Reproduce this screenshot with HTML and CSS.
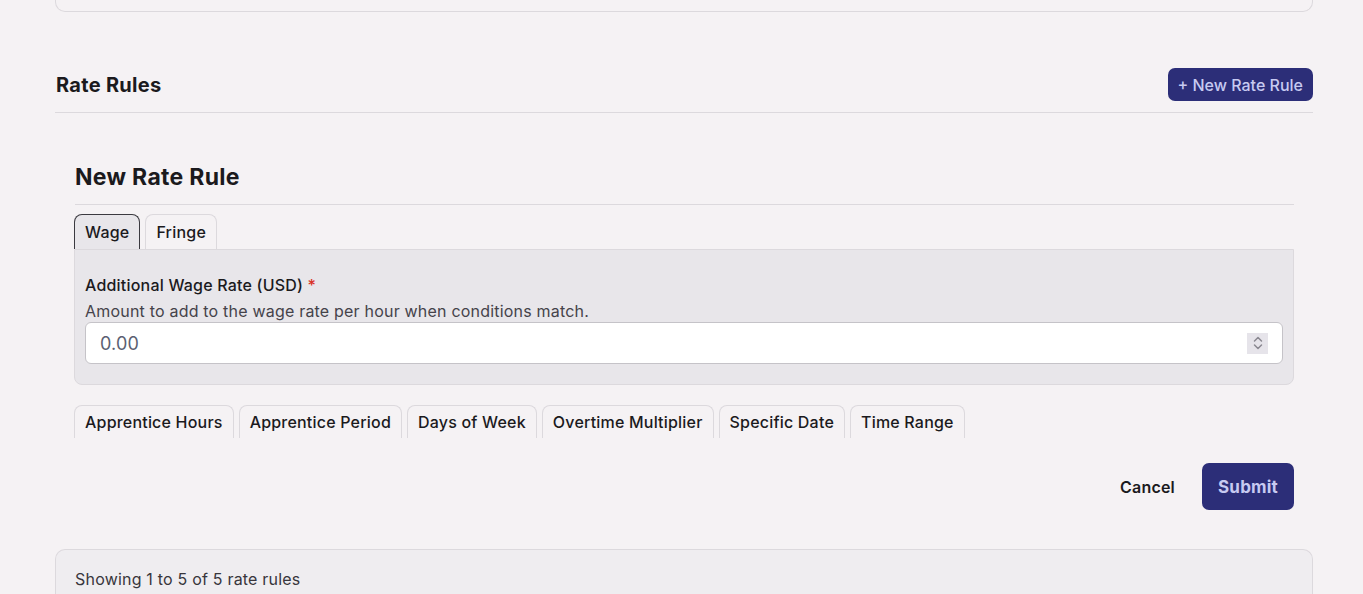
FILE: index.html
```html
<!DOCTYPE html>
<html lang="en">
<head>
  <meta charset="UTF-8">
  <meta name="viewport" content="width=device-width, initial-scale=1.0">
  <title>Rate Rules</title>
  <link rel="stylesheet" href="styles.css">
</head>
<body>
  <div class="page">
    <div class="card-top"></div>

    <div class="section-header">
      <h1>Rate Rules</h1>
      <button class="btn-primary btn-small" type="button">+ New Rate Rule</button>
    </div>

    <form class="rule-form">
      <h2>New Rate Rule</h2>

      <div class="tabs">
        <button type="button" class="tab active">Wage</button>
        <button type="button" class="tab">Fringe</button>
      </div>
      <div class="tab-panel">
        <label for="wage-rate">Additional Wage Rate (USD) <span class="req">*</span></label>
        <p class="help">Amount to add to the wage rate per hour when conditions match.</p>
        <div class="number-input">
          <input id="wage-rate" type="text" value="0.00">
          <span class="spinner">
            <svg width="12" height="16" viewBox="0 0 12 16" fill="none" stroke="#8a8891" stroke-width="1.5" stroke-linecap="round" stroke-linejoin="round">
              <path d="M2.5 6 L6 2.5 L9.5 6"/>
              <path d="M2.5 10 L6 13.5 L9.5 10"/>
            </svg>
          </span>
        </div>
      </div>

      <div class="tabs conditions">
        <button type="button" class="tab">Apprentice Hours</button>
        <button type="button" class="tab">Apprentice Period</button>
        <button type="button" class="tab">Days of Week</button>
        <button type="button" class="tab">Overtime Multiplier</button>
        <button type="button" class="tab">Specific Date</button>
        <button type="button" class="tab">Time Range</button>
      </div>

      <div class="actions">
        <button type="button" class="btn-link">Cancel</button>
        <button type="submit" class="btn-primary btn-large">Submit</button>
      </div>
    </form>

    <div class="card-bottom">
      Showing 1 to 5 of 5 rate rules
    </div>
  </div>
</body>
</html>
```

FILE: styles.css
```css
body {
  font-family: Inter, "Noto Sans", sans-serif;
  background-color: #f5f2f4;
  color: #1b1a1d;
  letter-spacing: 0.2px;
  margin: 0;
}
.page {
  padding: 0 50px 0 55px;
}
.card-top {
  height: 11px;
  border: 1px solid #dcd9dd;
  border-top: none;
  border-radius: 0 0 10px 10px;
}
.section-header {
  display: flex;
  justify-content: space-between;
  align-items: center;
  margin-top: 56px;
  padding-bottom: 11px;
  border-bottom: 1px solid #dcd9dd;
}
h1 {
  margin: 0;
  font-size: 20px;
  font-weight: 700;
  letter-spacing: 0.3px;
  padding: 1px 0 0 1px;
}
button {
  font-family: inherit;
  letter-spacing: inherit;
  cursor: pointer;
}
.btn-primary {
  background-color: #2c2e78;
  color: #c7caf1;
  border: none;
  border-radius: 7px;
}
.btn-small {
  height: 33px;
  padding: 0 10px;
  font-size: 16px;
  font-weight: 500;
  letter-spacing: 0;
}
.btn-large {
  height: 47px;
  padding: 0 16px;
  font-size: 17px;
  font-weight: 700;
}
.rule-form {
  padding: 50px 19px 0 20px;
}
h2 {
  margin: 0;
  font-size: 23px;
  line-height: 28px;
  font-weight: 700;
  letter-spacing: 0.3px;
  padding-bottom: 13px;
  border-bottom: 1px solid #dcd9dd;
}
.tabs {
  display: flex;
  gap: 5px;
  margin-top: 9px;
  margin-left: -1px;
}
.tab {
  height: 35px;
  padding: 0 10px;
  font-size: 16px;
  font-weight: 500;
  color: #1b1a1d;
  background: #f5f2f4;
  border: 1px solid #dcd9dd;
  border-bottom: none;
  border-radius: 8px 8px 0 0;
}
.tab.active {
  background: #e8e6ea;
  border-color: #3b3a40;
}
.tab-panel {
  background: #e8e6ea;
  border: 1px solid #dcd9dd;
  border-radius: 0 0 8px 8px;
  margin-left: -1px;
  padding: 25px 10px 20px 10px;
}
label {
  display: block;
  font-size: 16px;
  line-height: 20px;
  font-weight: 500;
}
.req {
  color: #d93025;
}
.help {
  margin: 6px 0 0 0;
  font-size: 16px;
  line-height: 20px;
  color: #45434a;
}
.number-input {
  display: flex;
  align-items: center;
  box-sizing: border-box;
  height: 42px;
  background: white;
  border: 1px solid #c5c3c8;
  border-radius: 6px;
  padding: 0 14px;
  margin-top: 1px;
}
.number-input input {
  flex: 1;
  border: none;
  outline: none;
  background: transparent;
  font-family: inherit;
  letter-spacing: inherit;
  font-size: 18px;
  color: #5b5f72;
  padding: 0;
}
.spinner {
  display: flex;
  align-items: center;
  justify-content: center;
  width: 21px;
  height: 21px;
  background: #e6e4ea;
}
.conditions {
  margin-top: 20px;
}
.conditions .tab {
  height: 33px;
}
.actions {
  display: flex;
  justify-content: flex-end;
  align-items: center;
  gap: 27px;
  margin-top: 25px;
}
.btn-link {
  background: none;
  border: none;
  font-size: 16px;
  font-weight: 600;
  color: #1b1a1d;
  padding: 0;
}
.card-bottom {
  margin-top: 39px;
  background: #efedf0;
  border: 1px solid #dcd9dd;
  border-bottom: none;
  border-radius: 10px 10px 0 0;
  padding: 19px 19px 20px 19px;
  font-size: 16px;
  color: #38363c;
}
```
